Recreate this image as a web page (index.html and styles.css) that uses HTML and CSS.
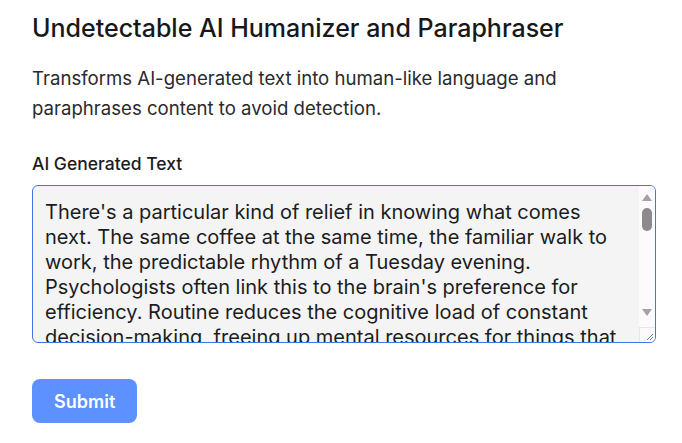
FILE: index.html
```html
<!DOCTYPE html>
<html lang="en">
  <head>
    <meta charset="UTF-8" />
    <meta name="viewport" content="width=device-width, initial-scale=1.0" />
    <title>Undetectable AI Humanizer and Paraphraser</title>
    <link rel="stylesheet" href="styles.css">
  </head>
  <body>
    <div class="container">
      <h1 class="title">Undetectable AI Humanizer and Paraphraser</h1>
      <p class="description">
        Transforms AI-generated text into human-like language and paraphrases content to avoid detection.
      </p>
      <form action="#">
        <label for="ai_text">AI Generated Text</label>
        <div class="field">
          <textarea id="ai_text">There's a particular kind of relief in knowing what comes next. The same coffee at the same time, the familiar walk to work, the predictable rhythm of a Tuesday evening. Psychologists often link this to the brain's preference for efficiency. Routine reduces the cognitive load of constant decision-making, freeing up mental resources for things that actually matter. But comfort can quietly turn into a cage when every day begins to look exactly like the last.</textarea>
          <div class="scrollbar">
            <span class="arrow up"></span>
            <span class="thumb"></span>
            <span class="arrow down"></span>
            <span class="corner">
              <svg width="8" height="8" viewBox="0 0 8 8"><path d="M7 1 L1 7 M7 4 L4 7" stroke="#777" stroke-width="1" fill="none"/></svg>
            </span>
          </div>
        </div>
        <button type="submit" id="sbutton">Submit</button>
      </form>
    </div>
  </body>
</html>
```

FILE: styles.css
```css
* {
  box-sizing: border-box;
  padding: 0;
  margin: 0;
  font-family: Inter, "Noto Sans", sans-serif;
}
body {
  background-color: #fff;
  color: #1c1c1e;
}
div.container {
  padding: 12px 32px;
}
.title {
  font-size: 25px;
  line-height: 32px;
  font-weight: 500;
  color: #18181b;
}
.description {
  margin-top: 19px;
  font-size: 18.6px;
  line-height: 30px;
  color: #2a2a2e;
}
form {
  display: flex;
  flex-direction: column;
  align-items: flex-start;
  margin-top: 29px;
}
label {
  font-size: 17.5px;
  line-height: 24px;
  font-weight: 500;
  color: #1c1c1e;
}
.field {
  position: relative;
  margin-top: 9px;
  width: 624px;
  height: 158px;
}
textarea {
  display: block;
  width: 100%;
  height: 100%;
  padding: 14px 28px 14px 12px;
  font-size: 20px;
  line-height: 25px;
  color: #1c1c1e;
  background-color: #f4f4f4;
  border: 1px solid #3f76f0;
  border-radius: 6px;
  outline: none;
  resize: none;
  overflow: hidden;
}
.scrollbar {
  position: absolute;
  top: 1px;
  right: 1px;
  bottom: 1px;
  width: 16px;
  background-color: #fbfbfb;
  border-radius: 0 5px 5px 0;
}
.arrow {
  position: absolute;
  left: 3px;
  width: 0;
  height: 0;
  border-left: 5px solid transparent;
  border-right: 5px solid transparent;
}
.arrow.up {
  top: 8px;
  border-bottom: 7px solid #a3a3a3;
}
.arrow.down {
  bottom: 26px;
  border-top: 7px solid #a3a3a3;
}
.thumb {
  position: absolute;
  top: 22px;
  left: 3px;
  width: 10px;
  height: 23px;
  background-color: #8a8a8a;
  border-radius: 5px;
}
.corner {
  position: absolute;
  left: 0;
  right: 0;
  bottom: 0;
  height: 15px;
  border-top: 1px solid #e6e6e6;
  border-left: 1px solid #e6e6e6;
  display: flex;
  align-items: flex-end;
  justify-content: flex-end;
  padding: 0 1px 1px 0;
}
button {
  margin-top: 36px;
  height: 44px;
  padding: 0 22px;
  border: none;
  border-radius: 8px;
  background-color: #5c91ff;
  color: #fff;
  font-size: 18px;
  font-weight: 600;
  cursor: pointer;
}
```
